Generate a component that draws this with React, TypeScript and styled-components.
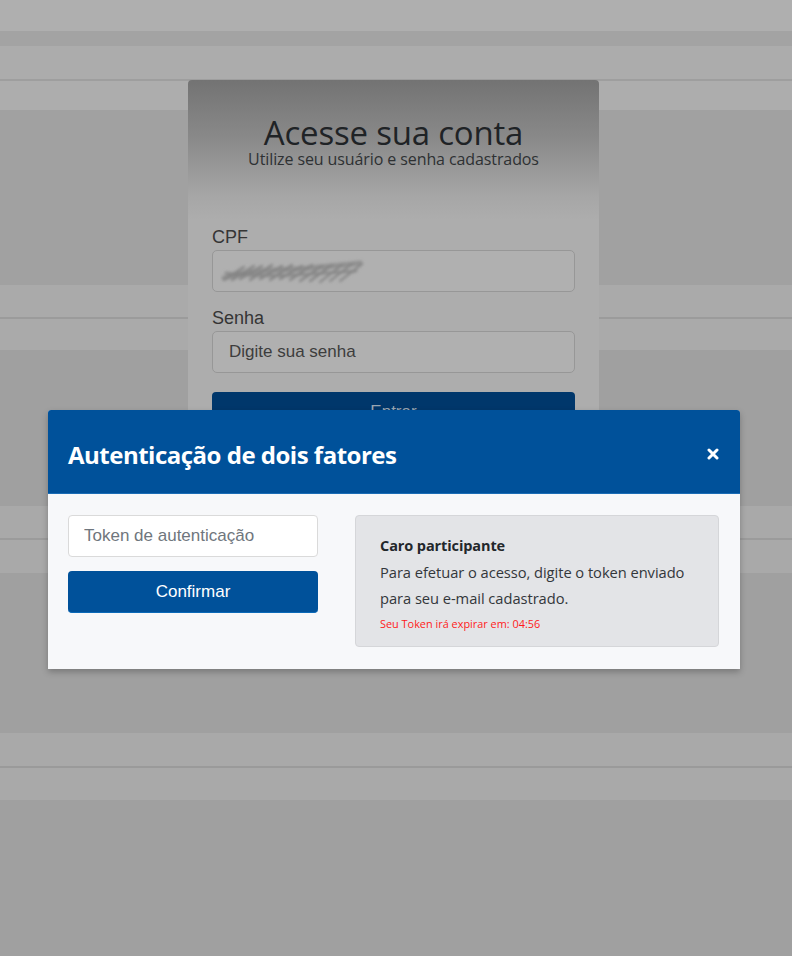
import React from "react";
import styled, { createGlobalStyle } from "styled-components";

const GlobalStyle = createGlobalStyle`
  html, body { margin: 0; padding: 0; }
  body { font-family: "Liberation Sans", Arial, sans-serif; }
  * { box-sizing: border-box; }
`;

const Page = styled.div`
  position: relative;
  width: 100%;
  min-height: 956px;
  overflow: hidden;
  padding-top: 80px;
  background: linear-gradient(
    to bottom,
    #afafaf 0 31px,
    #a3a3a3 31px 46px,
    #acacac 46px 79px,
    #9e9e9e 79px 81px,
    #adadad 81px 110px,
    #a1a1a1 110px 285px,
    #aaaaaa 285px 317px,
    #9b9b9b 317px 319px,
    #aaaaaa 319px 350px,
    #a0a0a0 350px 506px,
    #a9a9a9 506px 538px,
    #9b9b9b 538px 540px,
    #a9a9a9 540px 573px,
    #a0a0a0 573px 733px,
    #a9a9a9 733px 766px,
    #9a9a9a 766px 768px,
    #a9a9a9 768px 800px,
    #a0a0a0 800px
  );
`;

const LoginCard = styled.section`
  width: 411px;
  height: 480px;
  margin: 0 0 0 188px;
  border-radius: 4px 4px 0 0;
  padding: 36px 24px 0;
  background: linear-gradient(to bottom, #737373 0px, #8a8a8a 60px, #a6a6a6 115px, #adadad 140px, #adadad 100%);
  display: flex;
  flex-direction: column;
`;

const CardHeader = styled.header`
  display: flex;
  flex-direction: column;
  align-items: center;
  font-family: "Open Sans", sans-serif;
  margin-bottom: 59px;
`;

const CardTitle = styled.h1`
  margin: 0;
  font-size: 33px;
  font-weight: 400;
  line-height: 34px;
  letter-spacing: -0.2px;
  color: #1f2326;
`;

const CardSubtitle = styled.p`
  margin: 1px 0 0;
  font-size: 16px;
  line-height: 16px;
  letter-spacing: -0.1px;
  color: #2e3133;
`;

const Field = styled.div`
  display: flex;
  flex-direction: column;
  gap: 2px;
  margin-bottom: 15px;
`;

const FieldLabel = styled.label`
  font-family: "Liberation Sans", Arial, sans-serif;
  font-size: 18px;
  line-height: 22px;
  color: #353535;
`;

const FieldBox = styled.div`
  height: 42px;
  border: 1px solid #979797;
  border-radius: 5px;
  background: #b0b0b0;
  display: flex;
  align-items: center;
  padding: 0 16px;
  font-family: "Liberation Sans", Arial, sans-serif;
  font-size: 17px;
  color: #3d3d3d;
`;

const Scribble = styled.svg`
  margin-left: -9px;
  width: 146px;
  height: 30px;
`;

const EnterButton = styled.div`
  margin-top: 4px;
  height: 40px;
  border-radius: 4px;
  background: #00376b;
  color: #9aa6b2;
  font-family: "Liberation Sans", Arial, sans-serif;
  font-size: 17px;
  display: flex;
  justify-content: center;
  padding-top: 10px;
`;

const ModalLayer = styled.div`
  position: absolute;
  inset: 0;
  padding: 410px 0 0 48px;
`;

const Modal = styled.div`
  width: 692px;
  background: #f7f8fa;
  box-shadow: 0 3px 6px rgba(0, 0, 0, 0.25);
  border-radius: 3px 3px 0 0;
  overflow: hidden;
`;

const ModalHeader = styled.header`
  height: 84px;
  background: #00519a;
  border-bottom: 1px solid #1a6cb5;
  display: flex;
  align-items: center;
  justify-content: space-between;
  padding: 5px 20px 0 20px;
`;

const ModalTitle = styled.h2`
  margin: 0;
  font-family: "Open Sans", sans-serif;
  font-weight: 700;
  font-size: 24px;
  letter-spacing: -0.5px;
  color: #ffffff;
`;

const CloseButton = styled.button`
  border: 0;
  background: transparent;
  padding: 0;
  width: 14px;
  height: 14px;
  display: flex;
  align-items: center;
  justify-content: center;
  cursor: pointer;
`;

const ModalBody = styled.div`
  display: flex;
  padding: 21px 21px 22px 20px;
  gap: 37px;
`;

const LeftColumn = styled.div`
  width: 250px;
  display: flex;
  flex-direction: column;
  gap: 14px;
`;

const TokenInput = styled.input`
  height: 42px;
  width: 100%;
  border: 1px solid #dadada;
  border-radius: 4px;
  background: #ffffff;
  padding: 0 15px;
  font-family: "Liberation Sans", Arial, sans-serif;
  font-size: 17px;
  color: #333;
  outline: none;
  &::placeholder { color: #6f767d; }
`;

const ConfirmButton = styled.button`
  height: 42px;
  width: 100%;
  border: 0;
  border-bottom: 1px solid #0b6ab8;
  border-radius: 4px;
  background: #00519a;
  color: #ffffff;
  font-family: "Liberation Sans", Arial, sans-serif;
  font-size: 17px;
  cursor: pointer;
`;

const InfoBox = styled.div`
  flex: 1;
  height: 132px;
  background: #e3e4e7;
  border: 1px solid #d5d6d9;
  border-radius: 4px;
  padding: 17px 24px 0;
  font-family: "Open Sans", sans-serif;
  color: #33373b;
`;

const InfoTitle = styled.p`
  margin: 0;
  font-size: 14.5px;
  font-weight: 700;
  line-height: 26px;
  letter-spacing: -0.1px;
  color: #23272b;
`;

const InfoText = styled.p`
  margin: 0;
  font-size: 14.7px;
  line-height: 26px;
  letter-spacing: -0.05px;
`;

const ExpireText = styled.p`
  margin: 0;
  font-size: 10.9px;
  line-height: 26px;
  color: #ff1a1a;
`;

export default function App() {
  return (
    <>
      <GlobalStyle />
      <Page>
        <LoginCard>
          <CardHeader>
            <CardTitle>Acesse sua conta</CardTitle>
            <CardSubtitle>Utilize seu usuário e senha cadastrados</CardSubtitle>
          </CardHeader>
          <Field>
            <FieldLabel>CPF</FieldLabel>
            <FieldBox>
              <Scribble viewBox="0 0 146 30">
                <defs>
                  <filter id="blur" x="-10%" y="-40%" width="120%" height="180%">
                    <feGaussianBlur stdDeviation="1.8" />
                  </filter>
                </defs>
                <g stroke="#838383" fill="none" filter="url(#blur)" strokeLinecap="round">
                  <path d="M4 22 C30 13 60 15 90 12 S128 9 140 7" strokeWidth="5" opacity="0.7" />
                  <path d="M4 24 L24 11 M12 24 L34 10 M20 23 L42 10 M30 24 L52 9 M40 23 L62 10 M50 24 L72 9 M60 23 L82 10 M70 24 L92 9 M80 25 L102 10 M90 25 L112 9 M100 26 L122 9 M110 25 L132 8 M120 25 L142 8" strokeWidth="2.2" />
                  <path d="M6 17 C40 22 80 19 136 15" strokeWidth="3" opacity="0.8" />
                </g>
              </Scribble>
            </FieldBox>
          </Field>
          <Field>
            <FieldLabel>Senha</FieldLabel>
            <FieldBox>Digite sua senha</FieldBox>
          </Field>
          <EnterButton>Entrar</EnterButton>
        </LoginCard>
        <ModalLayer>
          <Modal role="dialog" aria-label="Autenticação de dois fatores">
            <ModalHeader>
              <ModalTitle>Autenticação de dois fatores</ModalTitle>
              <CloseButton aria-label="Fechar">
                <svg width="12" height="12" viewBox="0 0 12 12">
                  <path d="M2 2 L10 10 M10 2 L2 10" stroke="#ffffff" strokeWidth="3" strokeLinecap="round" />
                </svg>
              </CloseButton>
            </ModalHeader>
            <ModalBody>
              <LeftColumn>
                <TokenInput placeholder="Token de autenticação" />
                <ConfirmButton>Confirmar</ConfirmButton>
              </LeftColumn>
              <InfoBox>
                <InfoTitle>Caro participante</InfoTitle>
                <InfoText>Para efetuar o acesso, digite o token enviado</InfoText>
                <InfoText>para seu e-mail cadastrado.</InfoText>
                <ExpireText>Seu Token irá expirar em: 04:56</ExpireText>
              </InfoBox>
            </ModalBody>
          </Modal>
        </ModalLayer>
      </Page>
    </>
  );
}
